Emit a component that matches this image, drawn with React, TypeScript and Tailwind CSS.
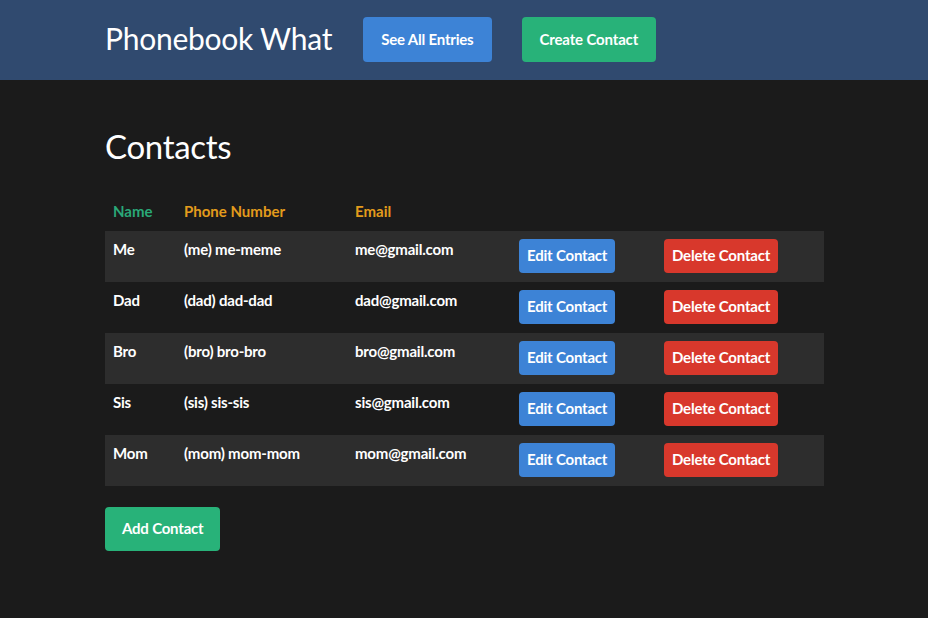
import { FC } from "react";

interface Contact {
  name: string;
  phone: string;
  email: string;
}

const contacts: Contact[] = [
  { name: "Me", phone: "(me) me-meme", email: "me@gmail.com" },
  { name: "Dad", phone: "(dad) dad-dad", email: "dad@gmail.com" },
  { name: "Bro", phone: "(bro) bro-bro", email: "bro@gmail.com" },
  { name: "Sis", phone: "(sis) sis-sis", email: "sis@gmail.com" },
  { name: "Mom", phone: "(mom) mom-mom", email: "mom@gmail.com" },
];

const App: FC = () => {
  return (
    <div
      className="min-h-[618px] bg-[#1b1b1b] text-white"
      style={{ fontFamily: "Lato, 'Noto Sans', sans-serif" }}
    >
      <nav className="h-20 bg-[#304a6f]">
        <div className="flex h-full items-center pb-px pl-[105px]">
          <h1 className="mr-[31px] pb-[3px] text-[30px] leading-none tracking-[-0.25px]">
            Phonebook What
          </h1>
          <button className="mr-[30px] h-[45px] rounded-[4px] bg-[#3d83d6] px-[18px] text-[15px] font-bold tracking-[-0.2px]">
            See All Entries
          </button>
          <button className="h-[45px] rounded-[4px] bg-[#28b279] px-[18px] text-[15px] font-bold tracking-[-0.15px]">
            Create Contact
          </button>
        </div>
      </nav>

      <main className="ml-[105px] w-[719px]">
        <h2 className="pt-[50px] text-[33px] leading-none tracking-[-0.3px]">
          Contacts
        </h2>

        <table className="mt-[37px] w-[719px] table-fixed border-collapse text-[15px] font-bold">
          <thead>
            <tr className="text-[15px]">
              <th className="w-[71px] px-2 pb-2 text-left text-[#2aa878]">
                Name
              </th>
              <th className="w-[171px] px-2 pb-2 text-left text-[#e39b1c]">
                Phone Number
              </th>
              <th className="w-[164px] px-2 pb-2 text-left text-[#e39b1c]">
                Email
              </th>
              <th className="w-[145px]"></th>
              <th className="w-[168px]"></th>
            </tr>
          </thead>
          <tbody>
            {contacts.map((c, i) => (
              <tr
                key={c.name}
                className={i % 2 === 0 ? "h-[51px] bg-[#2d2d2d]" : "h-[51px]"}
              >
                <td className="px-2 pt-2 align-top leading-5 tracking-[-0.2px]">
                  {c.name}
                </td>
                <td className="px-2 pt-2 align-top leading-5 tracking-[-0.2px]">
                  {c.phone}
                </td>
                <td className="px-2 pt-2 align-top leading-5 tracking-[-0.2px]">
                  {c.email}
                </td>
                <td className="px-2 pt-2 align-top">
                  <button className="h-[34px] rounded-[4px] bg-[#3d83d6] px-2 text-[15px] font-bold tracking-[-0.2px]">
                    Edit Contact
                  </button>
                </td>
                <td className="px-2 pt-2 align-top">
                  <button className="h-[34px] rounded-[4px] bg-[#d8382c] px-2 text-[15px] font-bold tracking-[-0.2px]">
                    Delete Contact
                  </button>
                </td>
              </tr>
            ))}
          </tbody>
        </table>

        <button className="mt-[21px] h-[44px] rounded-[4px] bg-[#28b279] px-[17px] text-[15px] font-bold tracking-[-0.2px]">
          Add Contact
        </button>
      </main>
    </div>
  );
};

export default App;
